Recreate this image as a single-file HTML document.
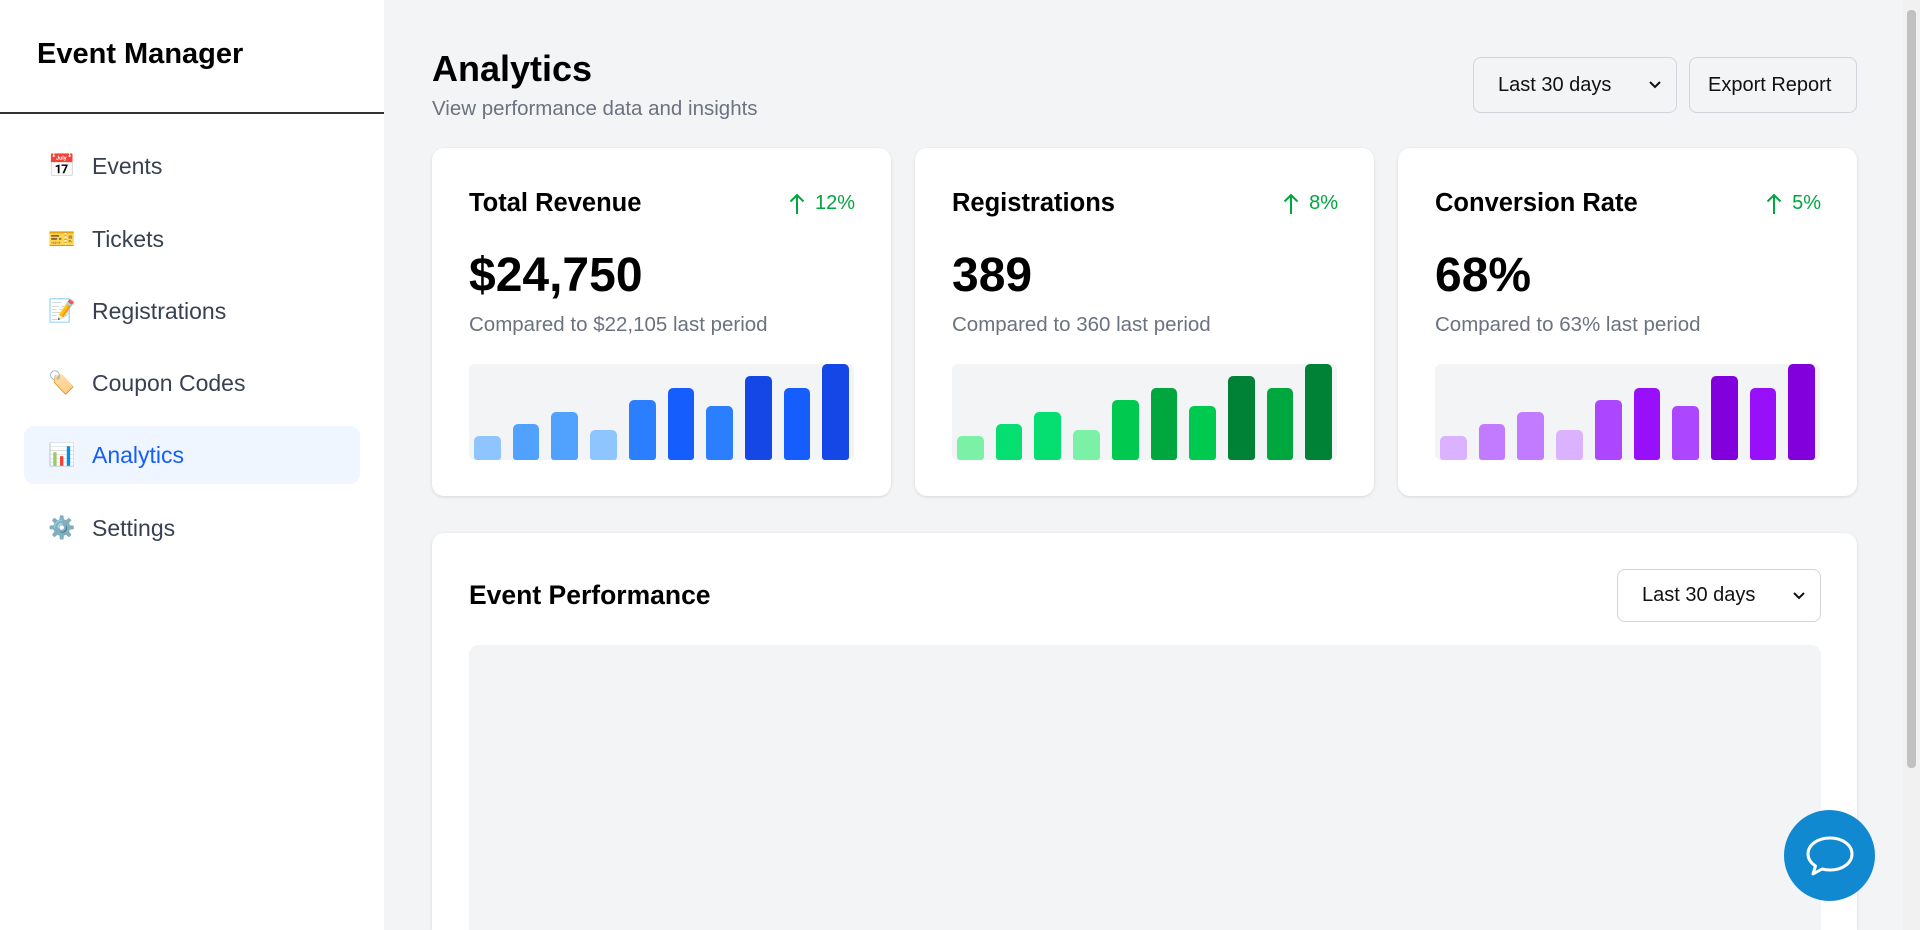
<!DOCTYPE html>
<html><head><meta charset="utf-8"><style>
*{box-sizing:border-box;margin:0;padding:0}
html,body{width:1920px;height:930px;overflow:hidden}
body{background:#f3f4f6;font-family:"Liberation Sans",sans-serif;position:relative}
.sb{position:absolute;left:0;top:0;width:384px;height:930px;background:#fff}
.sb h1{position:absolute;left:37px;top:38px;font-size:29px;font-weight:bold;color:#000}
.sb .line{position:absolute;left:0;top:112px;width:384px;height:2px;background:#333}
.nav{position:absolute;left:24px;height:58px;width:336px;border-radius:10px;display:flex;align-items:center;padding-left:24px;font-size:23px;color:#374151}
.nav .ic{width:30px;font-size:22px;margin-right:14px}
.nav.act{background:#eff6ff;color:#155dfc}
.h{position:absolute;left:432px;top:48px;font-size:36px;font-weight:bold;color:#000}
.sub{position:absolute;left:432px;top:97px;font-size:20.5px;color:#6b7280}
.sel{position:absolute;background:#f3f4f6;border:1px solid #d1d5db;border-radius:8px;font-size:20px;color:#111;display:flex;align-items:center;padding-left:24px}
.sel svg{position:absolute;right:14px;top:50%;margin-top:-5px}
.card{position:absolute;top:148px;width:459px;height:348px;background:#fff;border-radius:12px;box-shadow:0 1px 3px rgba(0,0,0,.12)}
.card .t{position:absolute;left:37px;top:41px;font-size:25.5px;font-weight:bold;color:#000}
.card .p{position:absolute;right:36px;top:44px;font-size:20px;color:#00a63e;display:flex;align-items:center;gap:10px}
.card .v{position:absolute;left:37px;top:100px;font-size:48px;font-weight:bold;color:#000}
.card .c{position:absolute;left:37px;top:165px;font-size:20.5px;color:#6b7280}
.ch{position:absolute;left:37px;top:216px;width:385px;height:96px;background:#f3f4f6;border-radius:6px;display:flex;align-items:flex-end;gap:12px;padding:0 5px}
.ch div{flex:1;border-radius:5px 5px 3px 3px}
.big{position:absolute;left:432px;top:533px;width:1425px;height:397px;overflow:hidden;background:#fff;border-radius:12px 12px 0 0;box-shadow:0 1px 3px rgba(0,0,0,.12)}
.big .t{position:absolute;left:37px;top:47px;font-size:26.5px;font-weight:bold;color:#000}
.big .g{position:absolute;left:37px;top:112px;width:1352px;height:285px;background:#f3f4f6;border-radius:10px 10px 0 0}
.chat{position:absolute;left:1784px;top:810px;width:91px;height:91px;border-radius:50%;background:#1189d1;display:flex;align-items:center;justify-content:center}
.scr{position:absolute;left:1903px;top:0;width:17px;height:930px;background:#f1f1f1}
.scr div{position:absolute;left:4px;top:10px;width:9px;height:758px;background:#c1c1c1;border-radius:4px}
</style></head><body>
<div class="sb"><h1>Event Manager</h1><div class="line"></div>
<div class="nav" style="top:137px"><span class="ic">📅</span>Events</div>
<div class="nav" style="top:210px"><span class="ic">🎫</span>Tickets</div>
<div class="nav" style="top:282px"><span class="ic">📝</span>Registrations</div>
<div class="nav" style="top:354px"><span class="ic">🏷️</span>Coupon Codes</div>
<div class="nav act" style="top:426px"><span class="ic">📊</span>Analytics</div>
<div class="nav" style="top:499px"><span class="ic">⚙️</span>Settings</div>
</div>
<div class="h">Analytics</div>
<div class="sub">View performance data and insights</div>
<div class="sel" style="left:1473px;top:57px;width:204px;height:56px">Last 30 days<svg width="14" height="9" viewBox="0 0 14 9"><path d="M2 2l5 5 5-5" stroke="#111" stroke-width="2" fill="none"/></svg></div>
<div class="sel" style="left:1689px;top:57px;width:168px;height:56px;padding-left:18px">Export Report</div>

<div class="card" style="left:432px"><div class="t">Total Revenue</div><div class="p"><svg width="16" height="22" viewBox="0 0 16 22"><path d="M8 21V2M1.5 8.5L8 2l6.5 6.5" stroke="#00a63e" stroke-width="2" fill="none"/></svg>12%</div><div class="v">$24,750</div><div class="c">Compared to $22,105 last period</div>
<div class="ch"><div style="height:25%;background:#8ec5ff"></div><div style="height:37.5%;background:#51a2ff"></div><div style="height:50%;background:#51a2ff"></div><div style="height:31%;background:#8ec5ff"></div><div style="height:62.5%;background:#2b7fff"></div><div style="height:75%;background:#155dfc"></div><div style="height:56%;background:#2b7fff"></div><div style="height:87.5%;background:#1447e6"></div><div style="height:75%;background:#155dfc"></div><div style="height:100%;background:#1447e6"></div></div></div>

<div class="card" style="left:915px"><div class="t">Registrations</div><div class="p"><svg width="16" height="22" viewBox="0 0 16 22"><path d="M8 21V2M1.5 8.5L8 2l6.5 6.5" stroke="#00a63e" stroke-width="2" fill="none"/></svg>8%</div><div class="v">389</div><div class="c">Compared to 360 last period</div>
<div class="ch"><div style="height:25%;background:#7bf1a8"></div><div style="height:37.5%;background:#05df72"></div><div style="height:50%;background:#05df72"></div><div style="height:31%;background:#7bf1a8"></div><div style="height:62.5%;background:#00c950"></div><div style="height:75%;background:#00a63e"></div><div style="height:56%;background:#00c950"></div><div style="height:87.5%;background:#008236"></div><div style="height:75%;background:#00a63e"></div><div style="height:100%;background:#008236"></div></div></div>

<div class="card" style="left:1398px"><div class="t">Conversion Rate</div><div class="p"><svg width="16" height="22" viewBox="0 0 16 22"><path d="M8 21V2M1.5 8.5L8 2l6.5 6.5" stroke="#00a63e" stroke-width="2" fill="none"/></svg>5%</div><div class="v">68%</div><div class="c">Compared to 63% last period</div>
<div class="ch"><div style="height:25%;background:#dab2ff"></div><div style="height:37.5%;background:#c27aff"></div><div style="height:50%;background:#c27aff"></div><div style="height:31%;background:#dab2ff"></div><div style="height:62.5%;background:#ad46ff"></div><div style="height:75%;background:#9810fa"></div><div style="height:56%;background:#ad46ff"></div><div style="height:87.5%;background:#8200db"></div><div style="height:75%;background:#9810fa"></div><div style="height:100%;background:#8200db"></div></div></div>

<div class="big"><div class="t">Event Performance</div><div class="g"></div></div>
<div class="sel" style="left:1617px;top:569px;width:204px;height:53px;background:#fff">Last 30 days<svg width="14" height="9" viewBox="0 0 14 9"><path d="M2 2l5 5 5-5" stroke="#111" stroke-width="2" fill="none"/></svg></div>

<div class="chat"><svg width="54" height="48" viewBox="0 0 54 48"><path d="M27 6C14.5 6 5 13 5 22c0 5 3 9 7.5 12L10 42l9-5c2.5.7 5 1 8 1 12.5 0 22-7 22-16S39.5 6 27 6z" fill="none" stroke="#fff" stroke-width="3" stroke-linejoin="round"/></svg></div>
<div class="scr"><div></div></div>
</body></html>
